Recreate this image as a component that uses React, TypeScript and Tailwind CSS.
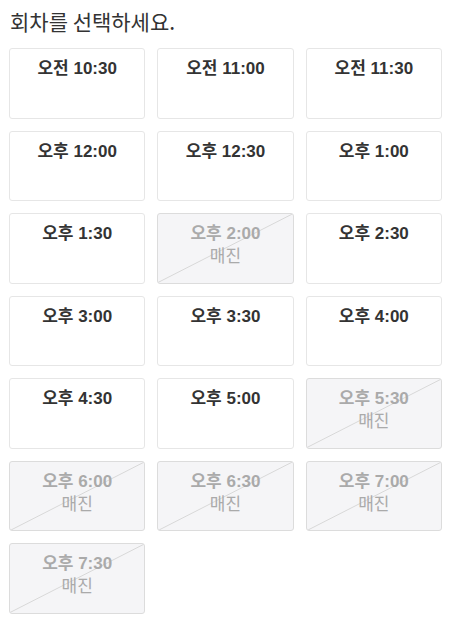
import React from "react";

const slots: { label: string; sold?: boolean }[] = [
  { label: "오전 10:30" },
  { label: "오전 11:00" },
  { label: "오전 11:30" },
  { label: "오후 12:00" },
  { label: "오후 12:30" },
  { label: "오후 1:00" },
  { label: "오후 1:30" },
  { label: "오후 2:00", sold: true },
  { label: "오후 2:30" },
  { label: "오후 3:00" },
  { label: "오후 3:30" },
  { label: "오후 4:00" },
  { label: "오후 4:30" },
  { label: "오후 5:00" },
  { label: "오후 5:30", sold: true },
  { label: "오후 6:00", sold: true },
  { label: "오후 6:30", sold: true },
  { label: "오후 7:00", sold: true },
  { label: "오후 7:30", sold: true },
];

export default function App() {
  return (
    <div
      className="w-[451px] bg-white px-[9px] pt-[6px] text-[#333]"
      style={{ fontFamily: '"Liberation Sans", "Noto Sans CJK KR", sans-serif' }}
    >
      <div className="text-[21px] leading-[30px] pl-[1px] text-[#333]" style={{ fontFamily: '"Noto Sans CJK KR", sans-serif' }}>
        회차를 선택하세요.
      </div>
      <div className="mt-[12px] grid grid-cols-3 gap-x-[12px] gap-y-[12px]">
        {slots.map((s) =>
          s.sold ? (
            <div
              key={s.label}
              className="relative h-[70.5px] rounded-[3px] border border-[#dcdcdc] bg-[#f5f5f7] flex flex-col items-center pt-[8px] text-[#aaa] overflow-hidden"
            >
              <svg className="absolute inset-0 w-full h-full" preserveAspectRatio="none" viewBox="0 0 100 100">
                <line x1="0" y1="100" x2="100" y2="0" stroke="#d8d8d8" strokeWidth="1" vectorEffect="non-scaling-stroke" />
              </svg>
              <div className="relative text-[17px] font-bold leading-[24px]">{s.label}</div>
              <div className="relative text-[17px] leading-[22px]">매진</div>
            </div>
          ) : (
            <div
              key={s.label}
              className="h-[70.5px] rounded-[3px] border border-[#e6e6e6] bg-white flex flex-col items-center pt-[8px]"
            >
              <div className="text-[17px] font-bold leading-[24px] text-[#333]">{s.label}</div>
            </div>
          )
        )}
      </div>
    </div>
  );
}
